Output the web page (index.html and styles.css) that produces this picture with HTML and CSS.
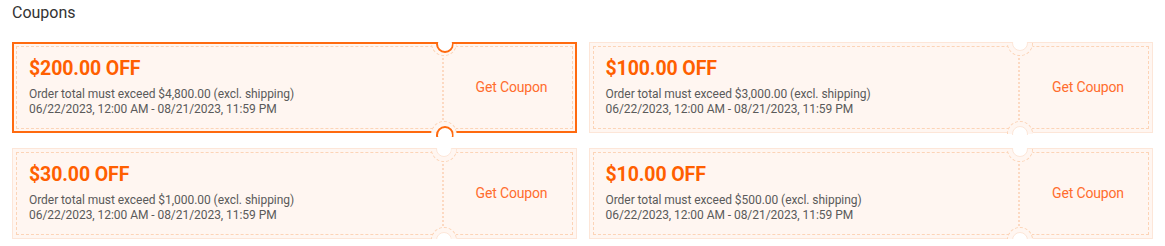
FILE: index.html
```html
<!DOCTYPE html>
<html lang="en">
<head>
<meta charset="utf-8">
<title>Coupons</title>
<link rel="stylesheet" href="styles.css">
</head>
<body>
<section class="coupons">
  <h2 class="title">Coupons</h2>
  <div class="grid">
    <div class="coupon selected">
      <div class="inner">
        <div class="info">
          <div class="amount">$200.00 OFF</div>
          <div class="line">Order total must exceed $4,800.00 (excl. shipping)</div>
          <div class="line">06/22/2023, 12:00 AM - 08/21/2023, 11:59 PM</div>
        </div>
        <div class="action">
          <span class="cut top"></span>
          <span class="get">Get Coupon</span>
          <span class="cut bottom"></span>
        </div>
      </div>
    </div>
    <div class="coupon">
      <div class="inner">
        <div class="info">
          <div class="amount">$100.00 OFF</div>
          <div class="line">Order total must exceed $3,000.00 (excl. shipping)</div>
          <div class="line">06/22/2023, 12:00 AM - 08/21/2023, 11:59 PM</div>
        </div>
        <div class="action">
          <span class="cut top"></span>
          <span class="get">Get Coupon</span>
          <span class="cut bottom"></span>
        </div>
      </div>
    </div>
    <div class="coupon">
      <div class="inner">
        <div class="info">
          <div class="amount">$30.00 OFF</div>
          <div class="line">Order total must exceed $1,000.00 (excl. shipping)</div>
          <div class="line">06/22/2023, 12:00 AM - 08/21/2023, 11:59 PM</div>
        </div>
        <div class="action">
          <span class="cut top"></span>
          <span class="get">Get Coupon</span>
          <span class="cut bottom"></span>
        </div>
      </div>
    </div>
    <div class="coupon">
      <div class="inner">
        <div class="info">
          <div class="amount">$10.00 OFF</div>
          <div class="line">Order total must exceed $500.00 (excl. shipping)</div>
          <div class="line">06/22/2023, 12:00 AM - 08/21/2023, 11:59 PM</div>
        </div>
        <div class="action">
          <span class="cut top"></span>
          <span class="get">Get Coupon</span>
          <span class="cut bottom"></span>
        </div>
      </div>
    </div>
  </div>
</section>
</body>
</html>
```

FILE: styles.css
```css
* { box-sizing: border-box; }

html, body {
  margin: 0;
  padding: 0;
  background: #fff;
}

body {
  font-family: Roboto, "Liberation Sans", Arial, sans-serif;
  color: #333;
}

.coupons {
  padding: 0 12px;
}

.title {
  margin: 0;
  padding-top: 3px;
  height: 42px;
  font-size: 16px;
  line-height: 20px;
  font-weight: 400;
  color: #333;
}

.grid {
  display: grid;
  grid-template-columns: 1fr 1fr;
  column-gap: 12px;
  row-gap: 15px;
}

.coupon {
  --bw: 1px;
  --bc: #fde6d8;
  position: relative;
  height: 91px;
  border: var(--bw) solid var(--bc);
  background: #fff6f1;
  padding: 3px;
}

.coupon.selected {
  --bw: 2px;
  --bc: #ff6a0f;
  padding: 2px;
}

.inner {
  height: 100%;
  border: 1px dashed #fcd4b7;
  display: flex;
}

.info {
  flex: 1;
  padding-left: 12px;
  display: flex;
  flex-direction: column;
  justify-content: center;
  padding-bottom: 1px;
}

.amount {
  font-size: 19.5px;
  line-height: 24px;
  font-weight: 700;
  color: #ff5f00;
  margin-bottom: 6px;
  letter-spacing: -0.1px;
}

.line {
  font-size: 12px;
  line-height: 15px;
  color: #5a5a5a;
  letter-spacing: -0.05px;
}

.action {
  position: relative;
  width: 130px;
  border-left: 2px dotted #fcd9c2;
  display: flex;
  align-items: center;
  justify-content: center;
  padding-left: 8px;
  padding-bottom: 2px;
}

.get {
  font-size: 14px;
  color: #ff6d2e;
  letter-spacing: -0.15px;
}

.cut {
  position: absolute;
  left: -1px;
  width: 0;
  height: 0;
}

.cut.top { top: -5px; }
.cut.bottom { bottom: -5px; }

.cut::before,
.cut::after {
  content: "";
  position: absolute;
  border-radius: 50%;
}

.cut::before {
  width: 24px;
  height: 24px;
  left: -12px;
  top: -12px;
  border: 1px dashed #fcd4b7;
  background: #fff6f1;
}

.cut::after {
  width: 14px;
  height: 14px;
  left: -7px;
  top: -7px;
  border: var(--bw) solid var(--bc);
  background: #fff;
}

.cut.top::before { clip-path: inset(calc(12px + var(--bw)) 0 0 0); }
.cut.top::after { clip-path: inset(7px 0 0 0); }
.cut.bottom::before { clip-path: inset(0 0 calc(12px + var(--bw)) 0); }
.cut.bottom::after { clip-path: inset(0 0 7px 0); }
```
